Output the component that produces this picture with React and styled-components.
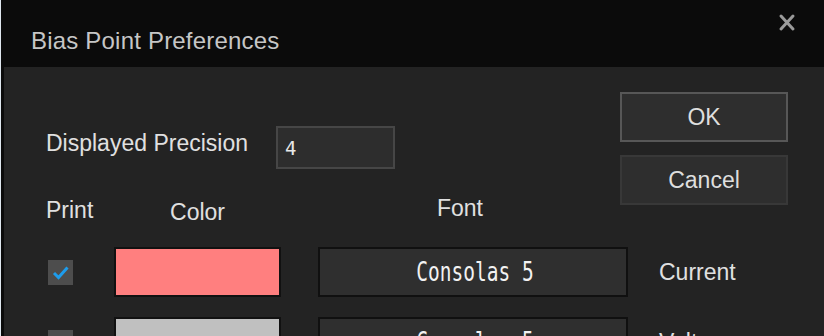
import styled, { createGlobalStyle } from 'styled-components';

const GlobalStyle = createGlobalStyle`
  html, body {
    margin: 0;
    padding: 0;
    overflow: hidden;
    background: #dfe7ef;
  }
  body {
    font-family: "Liberation Sans", Arial, sans-serif;
  }
`;

const rows = [
  { name: 'Current', color: '#ff7f7f', font: 'Consolas 5', checked: true },
  { name: 'Voltage', color: '#c0c0c0', font: 'Consolas 5', checked: true },
];

export default function App() {
  return (
    <>
      <GlobalStyle />
      <Window>
        <TitleBar>
          <Title>Bias Point Preferences</Title>
          <CloseButton aria-label="Close">
            <svg width="18" height="19" viewBox="0 0 18 19">
              <path
                d="M3 3 L15 16 M15 3 L3 16"
                stroke="#9a9a9a"
                strokeWidth="3"
                strokeLinecap="round"
              />
            </svg>
          </CloseButton>
        </TitleBar>
        <Body>
          <TopArea>
            <PrecisionRow>
              <Label>Displayed Precision</Label>
              <PrecisionInput defaultValue="4" />
            </PrecisionRow>
            <ButtonStack>
              <DialogButton $isDefault>OK</DialogButton>
              <DialogButton>Cancel</DialogButton>
            </ButtonStack>
            <HeaderRow>
              <HeaderCell>Print</HeaderCell>
              <HeaderCell $width={167} $center $offset={2}>
                Color
              </HeaderCell>
              <HeaderCell $width={284} $center $offset={-2}>
                Font
              </HeaderCell>
            </HeaderRow>
          </TopArea>
          <RowList>
            {rows.map((row) => (
              <PrefRow key={row.name}>
                <CheckBox>
                  {row.checked && (
                    <svg width="25" height="25" viewBox="0 0 25 25">
                      <path
                        d="M6 13 L10.5 17.5 L19.5 7.5"
                        fill="none"
                        stroke="#1d9cec"
                        strokeWidth="3"
                      />
                    </svg>
                  )}
                </CheckBox>
                <Swatch $color={row.color} />
                <FontButton>
                  <MonoText>{row.font}</MonoText>
                </FontButton>
                <Label>{row.name}</Label>
              </PrefRow>
            ))}
          </RowList>
        </Body>
      </Window>
    </>
  );
}

const Window = styled.div`
  margin-left: 1px;
  border-left: 3px solid #0b0b0b;
  height: 400px;
  background: #232323;
  display: flex;
  flex-direction: column;
`;

const TitleBar = styled.div`
  height: 67px;
  flex-shrink: 0;
  background: #0b0b0b;
  display: flex;
  justify-content: space-between;
  align-items: flex-start;
`;

const Title = styled.div`
  margin: 27px 0 0 27px;
  font-size: 24px;
  line-height: 28px;
  color: #c6c6c6;
  letter-spacing: 0.2px;
`;

const CloseButton = styled.div`
  margin: 13px 28px 0 0;
  width: 18px;
  height: 19px;
  display: flex;
`;

const Body = styled.div`
  display: flex;
  flex-direction: column;
  padding: 25px 36px 0 42px;
  color: #e2e2e2;
`;

const TopArea = styled.div`
  display: grid;
  grid-template-columns: 1fr 168px;
  grid-template-rows: 34px 43px 28px 26px;
`;

const PrecisionRow = styled.div`
  grid-column: 1;
  grid-row: 2;
  display: flex;
  align-items: flex-start;
  gap: 28px;

  & > span {
    margin-top: 4px;
  }
`;

const Label = styled.span`
  font-size: 23px;
  line-height: 26px;
  color: #e0e0e0;
  white-space: nowrap;
`;

const PrecisionInput = styled.input`
  box-sizing: border-box;
  width: 119px;
  height: 43px;
  margin: 0;
  padding: 0 0 0 7px;
  border: 2px solid #464646;
  background: #2d2d2d;
  color: #e8e8e8;
  font-family: "DejaVu Sans Mono", "Liberation Mono", monospace;
  font-size: 19px;
  outline: none;
`;

const ButtonStack = styled.div`
  grid-column: 2;
  grid-row: 1 / 5;
  align-self: start;
  display: flex;
  flex-direction: column;
  gap: 13px;
`;

const DialogButton = styled.button`
  box-sizing: border-box;
  width: 168px;
  height: 50px;
  margin: 0;
  padding: 0;
  background: #2e2e2e;
  border: 2px solid ${({ $isDefault }) => ($isDefault ? '#575757' : '#383838')};
  color: #dedede;
  font-family: "Liberation Sans", Arial, sans-serif;
  font-size: 23px;
  line-height: 26px;
`;

const HeaderRow = styled.div`
  grid-column: 1 / 3;
  grid-row: 4;
  display: grid;
  grid-template-columns: 68px 204px 341px;
  align-items: start;
`;

const HeaderCell = styled.span`
  font-size: 23px;
  line-height: 26px;
  color: #e0e0e0;
  width: ${({ $width }) => ($width ? `${$width}px` : 'auto')};
  text-align: ${({ $center }) => ($center ? 'center' : 'left')};
  margin-top: ${({ $offset }) => $offset || 0}px;
`;

const RowList = styled.div`
  margin-top: 24px;
  display: flex;
  flex-direction: column;
  gap: 20px;
`;

const PrefRow = styled.div`
  display: grid;
  grid-template-columns: 68px 204px 341px 1fr;
  height: 50px;
  align-items: center;
`;

const CheckBox = styled.div`
  margin-left: 2px;
  width: 25px;
  height: 25px;
  background: #4d4d4d;
  display: flex;
`;

const Swatch = styled.div`
  box-sizing: border-box;
  width: 167px;
  height: 50px;
  border: 2px solid #111111;
  background: ${({ $color }) => $color};
`;

const FontButton = styled.div`
  box-sizing: border-box;
  width: 310px;
  height: 50px;
  border: 2px solid #101010;
  background: #2f2f2f;
  display: flex;
  align-items: center;
  justify-content: center;
`;

const MonoText = styled.span`
  display: inline-block;
  font-family: "DejaVu Sans Mono", "Liberation Mono", monospace;
  font-size: 19.5px;
  color: #f2f2f2;
  transform: scaleY(1.33);
  margin-left: 4px;
`;
